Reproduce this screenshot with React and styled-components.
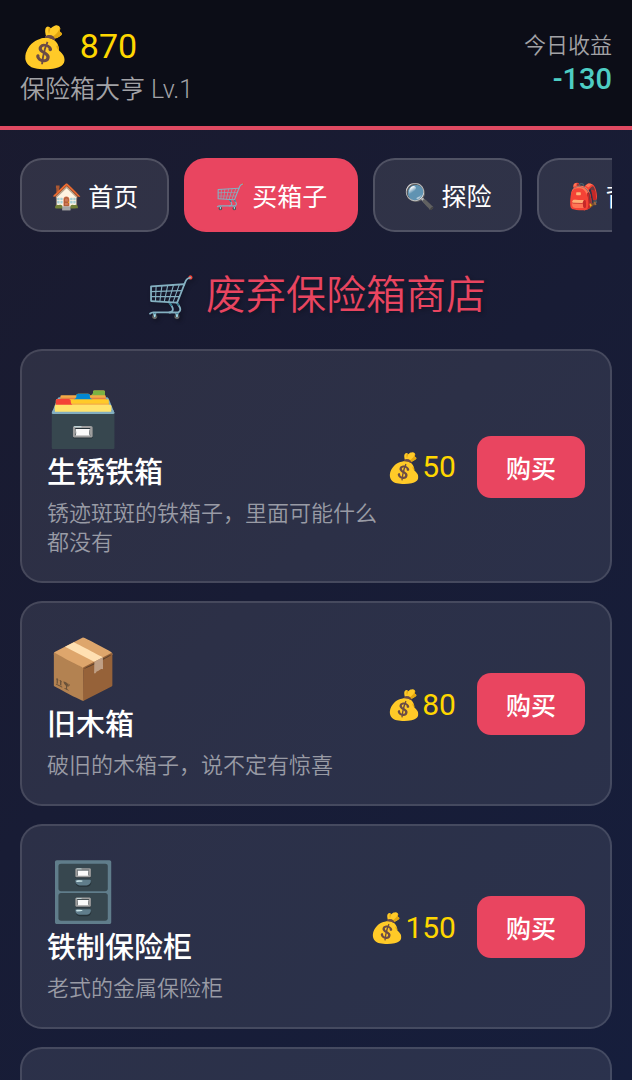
import React from 'react'
import styled, { createGlobalStyle } from 'styled-components'

const GlobalStyle = createGlobalStyle`
    * { box-sizing: border-box; }
    body {
        margin: 0;
        background: #1a1a2e;
        color: white;
        font-family: Roboto, "Noto Sans CJK SC", sans-serif;
    }
    h1, h2, p { margin: 0; }
    button { font-family: inherit; cursor: pointer; }
`;

const Page = styled.div`
    height: 100vh;
    overflow: hidden;
    background: linear-gradient(135deg, #1a1a2e 0%, #161e3c 100%);
`;

const Header = styled.header`
    display: flex;
    align-items: center;
    justify-content: space-between;
    padding: 20px 20px 18px;
    border-bottom: 4px solid #e04a62;
    background-color: #0c0d17;
`;

const Side = styled.div`
    text-align: ${props => props.$align || "left"};
`;

const Emoji = styled.span`
    padding-top: 3px;
    font-family: "Noto Color Emoji", sans-serif;
    font-size: ${props => props.$size}px;
    line-height: 1;
`;

const Coins = styled.div`
    display: flex;
    align-items: center;
    gap: 10px;
    height: 52px;
    font-size: 34px;
    color: #ffd700;
`;

const Level = styled.div`
    font-size: 25px;
    font-weight: 350;
    line-height: 36px;
    color: #a2a2a6;
`;

const IncomeLabel = styled.div`
    font-size: 22px;
    font-weight: 350;
    line-height: 30px;
    color: #a2a2a6;
`;

const Income = styled.div`
    font-size: 29px;
    font-weight: 500;
    line-height: 36px;
    color: #4ecdc4;
`;

const Content = styled.main`
    padding: 28px 20px;
`;

const Tabs = styled.nav`
    display: flex;
    gap: 15px;
    overflow: hidden;
`;

const Tab = styled.button`
    flex-shrink: 0;
    display: flex;
    align-items: center;
    gap: 6px;
    height: 74px;
    padding: 0 29px;
    border: 2px solid ${props => props.$active ? "#e94560" : "rgba(255, 255, 255, 0.16)"};
    border-radius: 22px;
    background-color: ${props => props.$active ? "#e94560" : "rgba(255, 255, 255, 0.1)"};
    color: white;
    font-size: 25px;
    white-space: nowrap;
`;

const Title = styled.h1`
    display: flex;
    align-items: center;
    justify-content: center;
    gap: 10px;
    margin: 34px 0 23px;
    font-size: 40px;
    font-weight: 350;
    line-height: 60px;
    color: #e94560;
    text-shadow: 2px 2px 4px rgba(0, 0, 0, 0.3);
`;

const List = styled.div`
    display: flex;
    flex-direction: column;
    gap: 18px;
`;

const Card = styled.article`
    display: flex;
    align-items: center;
    min-height: 205px;
    padding: 25px 25px 24px;
    border: 2px solid rgba(255, 255, 255, 0.12);
    border-radius: 22px;
    background-color: rgba(255, 255, 255, 0.09);
`;

const Info = styled.div`
    flex: 1;
`;

const Picture = styled.div`
    height: 77px;
    padding-top: 12px;
`;

const Name = styled.h2`
    margin-bottom: 6px;
    font-size: 29px;
    font-weight: 500;
    line-height: 40px;
`;

const Desc = styled.p`
    font-size: 22px;
    font-weight: 350;
    line-height: 29px;
    color: #999ba5;
`;

const Price = styled.div`
    display: flex;
    align-items: center;
    font-size: 30px;
    color: #ffd700;
`;

const BuyButton = styled.button`
    height: 62px;
    margin-left: 21px;
    padding: 0 29px;
    border: none;
    border-radius: 14px;
    background-color: #e94560;
    color: white;
    font-size: 25px;
    font-weight: 500;
`;

const tabs = [
    { id: 'home', icon: '🏠', label: '首页' },
    { id: 'shop', icon: '🛒', label: '买箱子' },
    { id: 'explore', icon: '🔍', label: '探险' },
    { id: 'bag', icon: '🎒', label: '背包' },
];

const boxes = [
    { icon: '🗃️', name: '生锈铁箱', desc: '锈迹斑斑的铁箱子，里面可能什么都没有', price: 50 },
    { icon: '📦', name: '旧木箱', desc: '破旧的木箱子，说不定有惊喜', price: 80 },
    { icon: '🗄️', name: '铁制保险柜', desc: '老式的金属保险柜', price: 150 },
];

//item is one box of the shop
const EachBox = ({item}) => {
  return (
        <Card>
            <Info>
                <Picture>
                    <Emoji $size={58}>{item.icon}</Emoji>
                </Picture>
                <Name>{item.name}</Name>
                <Desc>{item.desc}</Desc>
            </Info>
            <Price>
                <Emoji $size={29}>💰</Emoji>
                {item.price}
            </Price>
            <BuyButton type="button">购买</BuyButton>
        </Card>
  )
}

const App = () => {
  return (
        <Page>
            <GlobalStyle />
            <Header>
                <Side>
                    <Coins>
                        <Emoji $size={40}>💰</Emoji>
                        870
                    </Coins>
                    <Level>保险箱大亨 Lv.1</Level>
                </Side>
                <Side $align="right">
                    <IncomeLabel>今日收益</IncomeLabel>
                    <Income>-130</Income>
                </Side>
            </Header>
            <Content>
                <Tabs>
                    {tabs.map(tab => (
                        <Tab key={tab.id} type="button" $active={tab.id === 'shop'}>
                            <Emoji $size={25}>{tab.icon}</Emoji>
                            {tab.label}
                        </Tab>
                    ))}
                </Tabs>
                <Title>
                    <Emoji $size={40}>🛒</Emoji>
                    废弃保险箱商店
                </Title>
                <List>
                    {boxes.map(item => <EachBox key={item.name} item={item} />)}
                    <Card />
                </List>
            </Content>
        </Page>
  )
}

export default App
